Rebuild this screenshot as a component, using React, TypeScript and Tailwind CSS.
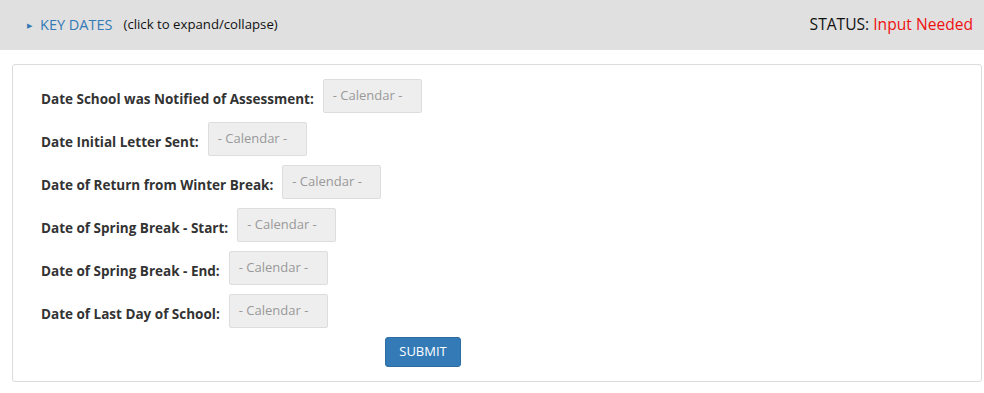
const rows = [
  "Date School was Notified of Assessment:",
  "Date Initial Letter Sent:",
  "Date of Return from Winter Break:",
  "Date of Spring Break - Start:",
  "Date of Spring Break - End:",
  "Date of Last Day of School:",
];

export default function App() {
  return (
    <div className="w-[984px] h-[393px] bg-white font-['Open_Sans',sans-serif] text-[#333]">
      {/* Header bar */}
      <div className="h-[50px] bg-[#e0e0e0] flex items-center justify-between pl-[27px] pr-[11px]">
        <div className="flex items-center">
          <span className="text-[#337ab7] text-[7px] mr-[8px] leading-none">&#9654;</span>
          <span className="text-[#337ab7] text-[14.5px]">KEY DATES</span>
          <span className="text-[13.2px] text-[#111] ml-[11px]">(click to expand/collapse)</span>
        </div>
        <div className="text-[15.6px]">
          <span className="text-[#111]">STATUS: </span>
          <span className="text-[#ee1111]">Input Needed</span>
        </div>
      </div>

      {/* Card */}
      <div className="mt-[14px] ml-[12px] w-[970px] border border-[#dcdcdc] rounded-[3px] pt-[14px] pb-[14px] pl-[28px]">
        <div className="flex flex-col gap-[10px]">
          {rows.map((label) => (
            <div key={label} className="flex items-center h-[33px]">
              <span className="text-[13.5px] font-bold text-[#333] mt-[8px]">{label}</span>
              <div className="ml-[9px] w-[99px] h-[34px] bg-[#eeeeee] border border-[#dddddd] rounded-[2px] pl-[9px] pt-[6px] text-[13px] text-[#999]">
                - Calendar -
              </div>
            </div>
          ))}
          <div className="pl-[344px]">
            <button className="w-[76px] h-[30px] bg-[#337ab7] border border-[#2e6da4] rounded-[3px] text-white text-[13px]">
              SUBMIT
            </button>
          </div>
        </div>
      </div>
    </div>
  );
}
